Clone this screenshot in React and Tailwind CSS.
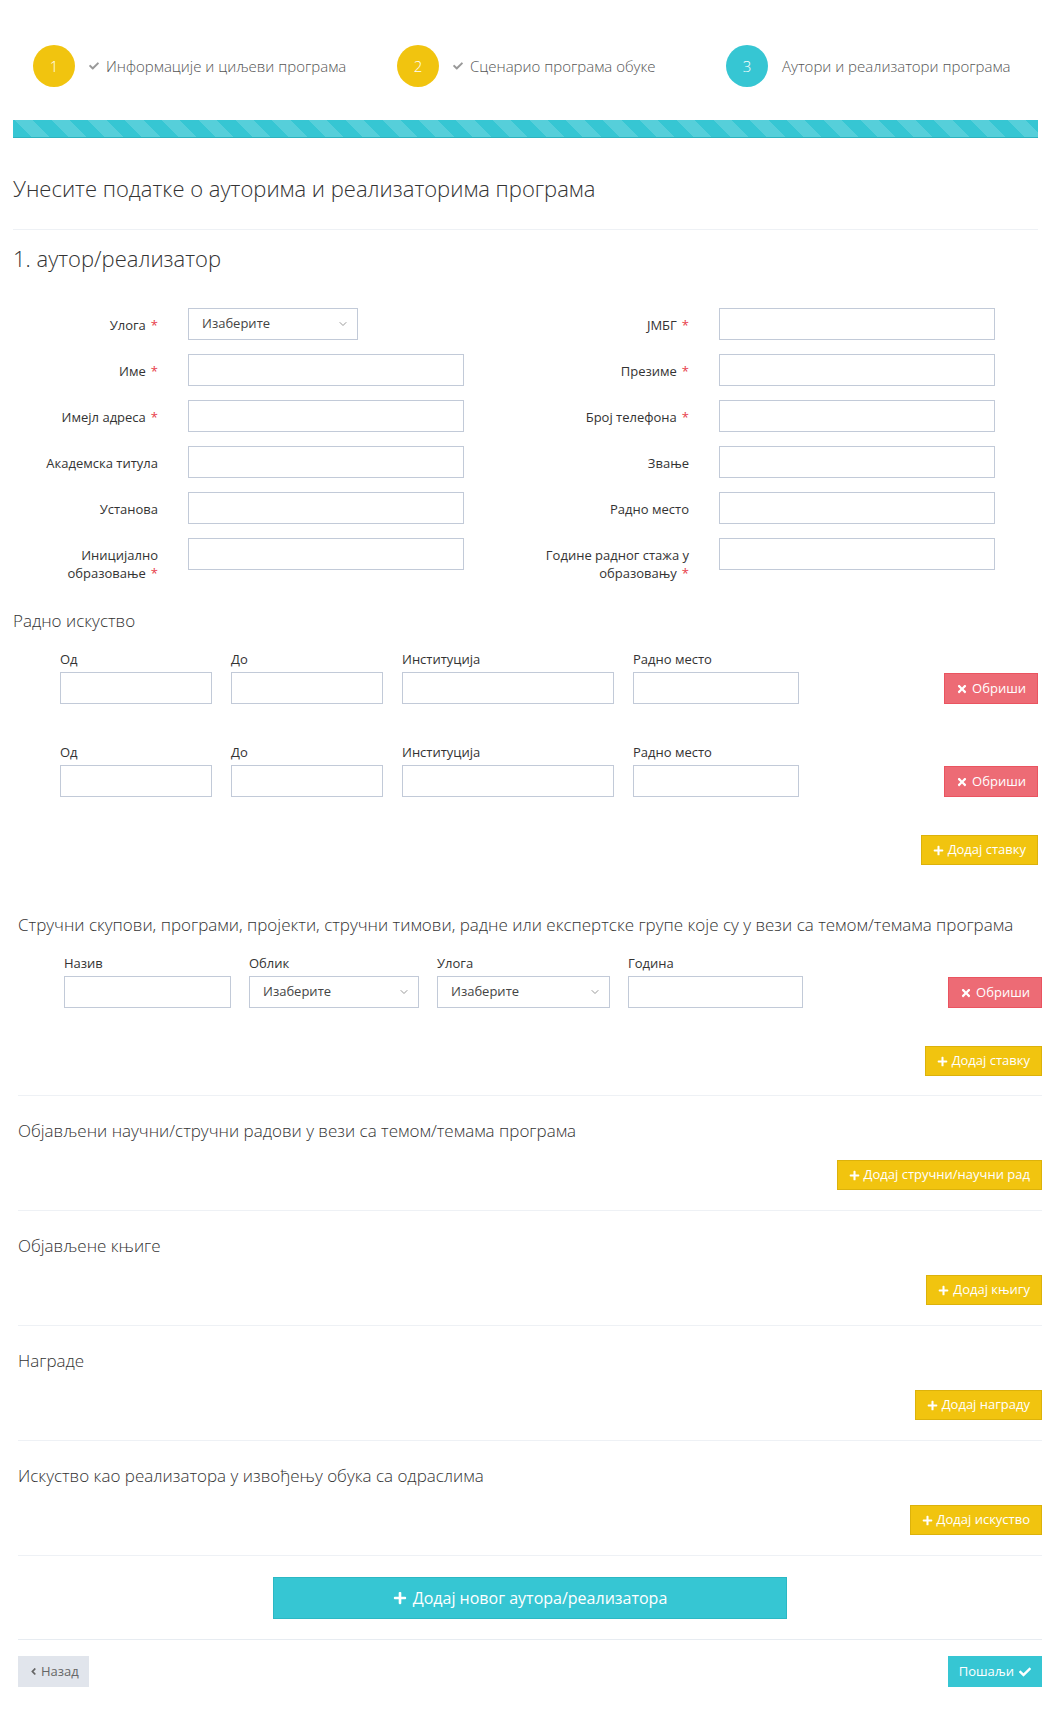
import React from 'react';
import { FaCheck, FaTimes, FaPlus, FaAngleLeft } from 'react-icons/fa';
import { ChevronDown } from 'lucide-react';

const Req = () => <span className="text-[#e73d4a] ml-[5px]">*</span>;

const TextInput = ({ w }) => (
  <input type="text" className={`${w} h-[32px] border border-[#c2cad8] bg-white outline-none px-3 text-[13px]`} />
);

const Select = ({ w }) => (
  <div className={`relative ${w} h-[32px]`}>
    <select className="w-full h-full appearance-none border border-[#c2cad8] bg-white pl-[13px] text-[13px] text-[#444] outline-none">
      <option>Изаберите</option>
    </select>
    <ChevronDown size={12} strokeWidth={2} className="absolute right-[9px] top-[10px] text-[#999] pointer-events-none" />
  </div>
);

const FormRow = ({ label, req, select }) => (
  <div className="flex items-start">
    <label className="w-[145px] text-right text-[13px] leading-[18px] pt-[8px] text-[#333]">
      {label}
      {req && <Req />}
    </label>
    <div className="ml-[30px]">
      {select ? <Select w="w-[170px]" /> : <TextInput w="w-[276px]" />}
    </div>
  </div>
);

const Field = ({ label, children }) => (
  <div className="flex flex-col">
    <span className="text-[13px] leading-[18px] text-[#333] mb-[4px]">{label}</span>
    {children}
  </div>
);

const RedButton = () => (
  <button className="h-[31px] px-[11px] bg-[#ed6b75] border border-[#ea5460] text-white text-[13px] font-medium flex items-center gap-[4px]">
    <FaTimes size={12} />
    Обриши
  </button>
);

const YellowButton = ({ children }) => (
  <button className="h-[30px] px-[11px] bg-[#f1c40f] border border-[#dcb20b] text-white text-[13px] flex items-center gap-[4px]">
    <FaPlus size={11} />
    {children}
  </button>
);

const Step = ({ n, color, text, done, w }) => (
  <div className={`flex items-center ${w}`}>
    <div className={`w-[42px] h-[42px] rounded-full ${color} text-white text-[15px] font-light flex items-center justify-center`}>{n}</div>
    <div className="ml-[14px] flex items-center text-[15px] font-light text-[#555]">
      {done && <FaCheck size={10} className="text-[#999] mr-[7px]" />}
      {text}
    </div>
  </div>
);

const Section = ({ title, button }) => (
  <div>
    <div className="mt-[24px] text-[17px] leading-[22px] font-light text-[#333]">{title}</div>
    <div className="mt-[18px] flex justify-end">
      <YellowButton>{button}</YellowButton>
    </div>
    <div className="mt-[20px] border-t border-[#eef1f5]" />
  </div>
);

export default function App() {
  const left = [
    { label: 'Улога', req: true, select: true },
    { label: 'Име', req: true },
    { label: 'Имејл адреса', req: true },
    { label: 'Академска титула' },
    { label: 'Установа' },
    { label: <>Иницијално<br />образовање</>, req: true },
  ];
  const right = [
    { label: 'ЈМБГ', req: true },
    { label: 'Презиме', req: true },
    { label: 'Број телефона', req: true },
    { label: 'Звање' },
    { label: 'Радно место' },
    { label: <>Године радног стажа у<br />образовању</>, req: true },
  ];

  return (
    <div className="w-[1060px] min-h-[1728px] bg-white font-['Open_Sans',sans-serif] text-[#333]">
      <div className="ml-[13px] w-[1025px]">
        <div className="pt-[45px] flex">
          <div className="ml-[20px]" />
          <Step n="1" color="bg-[#f1c40f]" text="Информације и циљеви програма" done w="w-[364px]" />
          <Step n="2" color="bg-[#f1c40f]" text="Сценарио програма обуке" done w="w-[329px]" />
          <Step n="3" color="bg-[#36c6d3]" text="Аутори и реализатори програма" />
        </div>

        <div className="mt-[33px] h-[18px] border-b border-[#2db3bf] bg-[repeating-linear-gradient(45deg,#36c6d3_0,#36c6d3_13px,#56cfda_13px,#56cfda_26px)]" />

        <h2 className="mt-[36px] text-[22px] leading-[28px] font-light text-[#333]">Унесите податке о ауторима и реализаторима програма</h2>
        <div className="mt-[27px] border-t border-[#eef1f5]" />

        <h3 className="mt-[13px] text-[22px] leading-[30px] font-light text-[#333]">1. аутор/реализатор</h3>

        <div className="mt-[35px] flex">
          <div className="w-[531px] flex flex-col gap-[14px]">
            {left.map((r, i) => <FormRow key={i} {...r} />)}
          </div>
          <div className="flex flex-col gap-[14px]">
            {right.map((r, i) => <FormRow key={i} {...r} />)}
          </div>
        </div>

        <div className="mt-[28px] text-[17px] leading-[22px] font-light text-[#333]">Радно искуство</div>

        {[0, 1].map((i) => (
          <div key={i} className={`${i === 0 ? 'mt-[18px]' : 'mt-[39px]'} flex items-end pl-[47px]`}>
            <div className="flex gap-[19px]">
              <Field label="Од"><TextInput w="w-[152px]" /></Field>
              <Field label="До"><TextInput w="w-[152px]" /></Field>
              <Field label="Институција"><TextInput w="w-[212px]" /></Field>
              <Field label="Радно место"><TextInput w="w-[166px]" /></Field>
            </div>
            <div className="ml-auto"><RedButton /></div>
          </div>
        ))}

        <div className="mt-[38px] flex justify-end">
          <YellowButton>Додај ставку</YellowButton>
        </div>
      </div>

      <div className="ml-[18px] w-[1024px]">
        <div className="mt-[49px] text-[17px] leading-[22px] font-light text-[#333]">
          Стручни скупови, програми, пројекти, стручни тимови, радне или експертске групе које су у вези са темом/темама програма
        </div>

        <div className="mt-[18px] flex items-end pl-[46px]">
          <div className="flex gap-[18px]">
            <Field label="Назив"><TextInput w="w-[167px]" /></Field>
            <Field label="Облик"><Select w="w-[170px]" /></Field>
            <Field label="Улога"><Select w="w-[173px]" /></Field>
            <Field label="Година"><TextInput w="w-[175px]" /></Field>
          </div>
          <div className="ml-auto"><RedButton /></div>
        </div>

        <div className="mt-[38px] flex justify-end">
          <YellowButton>Додај ставку</YellowButton>
        </div>
        <div className="mt-[19px] border-t border-[#eef1f5]" />

        <Section title="Објављени научни/стручни радови у вези са темом/темама програма" button="Додај стручни/научни рад" />
        <Section title="Објављене књиге" button="Додај књигу" />
        <Section title="Награде" button="Додај награду" />
        <Section title="Искуство као реализатора у извођењу обука са одраслима" button="Додај искуство" />

        <div className="mt-[21px] flex justify-center">
          <button className="w-[514px] h-[42px] bg-[#36c6d3] border border-[#2bb8c4] text-white text-[16px] font-medium flex items-center justify-center gap-[6px]">
            <FaPlus size={14} />
            Додај новог аутора/реализатора
          </button>
        </div>
        <div className="mt-[20px] border-t border-[#e7ecf1]" />

        <div className="mt-[16px] flex justify-between">
          <button className="h-[31px] px-[10px] bg-[#e1e5ec] text-[#666] text-[13px] flex items-center gap-[2px]">
            <FaAngleLeft size={11} />
            Назад
          </button>
          <button className="h-[31px] px-[11px] bg-[#36c6d3] text-white text-[13px] flex items-center gap-[5px]">
            Пошаљи
            <FaCheck size={12} />
          </button>
        </div>
      </div>
    </div>
  );
}
